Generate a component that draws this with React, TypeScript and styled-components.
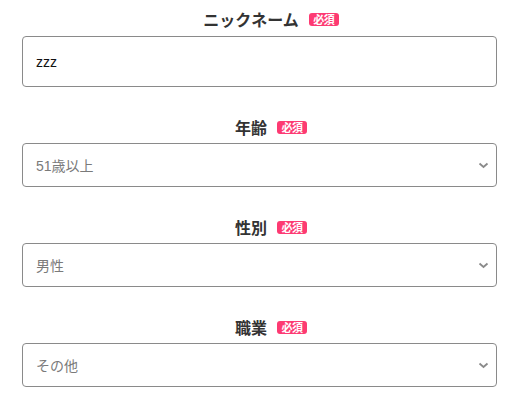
import React from "react";
import styled, { createGlobalStyle } from "styled-components";

const Global = createGlobalStyle`
  html, body { margin: 0; padding: 0; background: #fff; }
  body { font-family: "Liberation Sans", "Noto Sans CJK JP", sans-serif; color: #333; }
`;

const Form = styled.div`
  width: 475px;
  padding: 8px 24px 0 22px;
  display: flex;
  flex-direction: column;
  gap: 29px;
`;

const Section = styled.div<{ $gap: number }>`
  display: flex;
  flex-direction: column;
  gap: ${(p) => p.$gap}px;
`;

const LabelRow = styled.div`
  height: 22px;
  display: flex;
  align-items: center;
  justify-content: center;
  gap: 10px;
  padding-left: 23px;
`;

const LabelText = styled.span`
  font-family: "Noto Sans CJK JP", sans-serif;
  font-weight: 700;
  font-size: 16px;
  color: #333;
  line-height: 22px;
`;

const Badge = styled.span`
  display: inline-flex;
  align-items: center;
  justify-content: center;
  width: 30px;
  height: 13px;
  border-radius: 3px;
  background: #fd3a72;
  color: #fff;
  font-family: "Noto Sans CJK JP", sans-serif;
  font-weight: 700;
  font-size: 11px;
  line-height: 13px;
  letter-spacing: -0.5px;
  margin-top: 1px;
`;

const TextInput = styled.div`
  box-sizing: border-box;
  height: 51px;
  border: 1px solid #8a8a8a;
  border-radius: 4px;
  display: flex;
  align-items: center;
  padding-left: 13px;
  font-size: 14px;
  color: #111;
`;

const Select = styled.div`
  box-sizing: border-box;
  height: 44px;
  border: 1px solid #8a8a8a;
  border-radius: 4px;
  display: flex;
  align-items: center;
  justify-content: space-between;
  padding: 0 7px 0 13px;
  font-size: 14px;
  color: #7a7a7a;
`;

const Chevron = () => (
  <svg width="11" height="8" viewBox="0 0 11 8">
    <path d="M1.5 2.5 L5.5 6 L9.5 2.5" fill="none" stroke="#8a8a8a" strokeWidth="1.8" />
  </svg>
);

const Label = ({ text }: { text: string }) => (
  <LabelRow>
    <LabelText>{text}</LabelText>
    <Badge>必須</Badge>
  </LabelRow>
);

const selects = [
  { label: "年齢", value: "51歳以上" },
  { label: "性別", value: "男性" },
  { label: "職業", value: "その他" },
];

export default function App() {
  return (
    <>
      <Global />
      <Form>
        <Section $gap={6}>
          <Label text="ニックネーム" />
          <TextInput>zzz</TextInput>
        </Section>
        {selects.map((s) => (
          <Section $gap={5} key={s.label}>
            <Label text={s.label} />
            <Select>
              <span>{s.value}</span>
              <Chevron />
            </Select>
          </Section>
        ))}
      </Form>
    </>
  );
}
